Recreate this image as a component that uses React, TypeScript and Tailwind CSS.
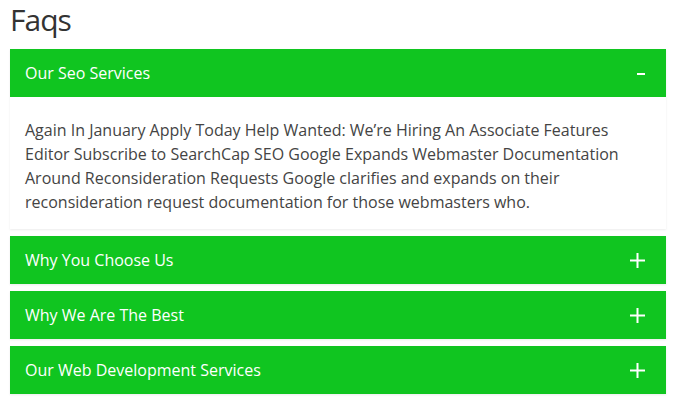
import { useState } from "react";

const faqs = [
  {
    title: "Our Seo Services",
    body: "Again In January Apply Today Help Wanted: We’re Hiring An Associate Features Editor Subscribe to SearchCap SEO Google Expands Webmaster Documentation Around Reconsideration Requests Google clarifies and expands on their reconsideration request documentation for those webmasters who.",
  },
  { title: "Why You Choose Us", body: "" },
  { title: "Why We Are The Best", body: "" },
  { title: "Our Web Development Services", body: "" },
];

const PlusIcon = () => (
  <svg width="15" height="15" viewBox="0 0 15 15" className="block">
    <rect x="0" y="6.5" width="15" height="2" fill="#fff" />
    <rect x="6.5" y="0" width="2" height="15" fill="#fff" />
  </svg>
);

const MinusIcon = () => (
  <svg width="8" height="2" viewBox="0 0 8 2" className="block mt-[2px]">
    <rect x="0" y="0" width="8" height="2" fill="#fff" />
  </svg>
);

export default function App() {
  const [open, setOpen] = useState(0);

  return (
    <div className="w-[676px] h-[410px] bg-white px-[10px] font-['Open_Sans',sans-serif]">
      <h1 className="text-[30px] leading-[40px] tracking-[-1px] text-[#333] font-normal mb-[9px]">Faqs</h1>

      <div className="flex flex-col gap-[7px]">
        {faqs.map((faq, i) => (
          <div key={faq.title} className="bg-white shadow-[0_1px_2px_rgba(0,0,0,0.08)]">
            <button
              className="w-full h-[48px] bg-[#10c520] flex items-center justify-between pl-[15px] pr-[21px] text-white text-[16px] text-left"
              onClick={() => setOpen(open === i ? -1 : i)}
            >
              <span>{faq.title}</span>
              {open === i ? <MinusIcon /> : <PlusIcon />}
            </button>
            {open === i && (
              <div className="pt-[21px] pb-[15px] pl-[15px] pr-[20px] text-[16px] leading-[24px] text-[#444]">
                {faq.body}
              </div>
            )}
          </div>
        ))}
      </div>
    </div>
  );
}
